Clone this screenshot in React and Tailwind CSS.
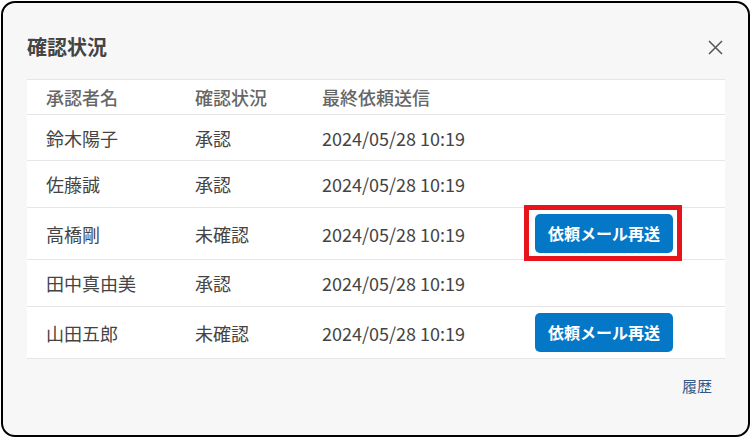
const rows = [
  { name: '鈴木陽子', status: '承認', sentAt: '2024/05/28 10:19', resend: false },
  { name: '佐藤誠', status: '承認', sentAt: '2024/05/28 10:19', resend: false },
  { name: '高橋剛', status: '未確認', sentAt: '2024/05/28 10:19', resend: true, marked: true },
  { name: '田中真由美', status: '承認', sentAt: '2024/05/28 10:19', resend: false },
  { name: '山田五郎', status: '未確認', sentAt: '2024/05/28 10:19', resend: true },
];

function ResendButton({ marked }) {
  return (
    <div className="relative inline-block">
      <button
        type="button"
        className="h-[39px] rounded-[5px] bg-[#0577c7] px-[13px] text-[16px] font-bold leading-[39px] text-white"
      >
        依頼メール再送
      </button>
      {marked && (
        <div className="pointer-events-none absolute -left-[11px] -right-[9px] -top-[9px] -bottom-[8px] border-[5px] border-[#e8141c]" />
      )}
    </div>
  );
}

function App() {
  return (
    <div className="h-[440px] w-[752px] bg-white pl-[1px] pt-[1px] font-['Noto_Sans_CJK_JP',sans-serif]">
      <div className="h-[436px] w-[749px] rounded-[14px] border-2 border-black bg-[#f7f7f7] pl-[24px] pr-[23px] pt-[30px]">
        <div className="mb-[18px] flex h-[28px] items-center justify-between">
          <h2 className="text-[20px] font-bold leading-[28px] text-[#444]">確認状況</h2>
          <button type="button" className="mr-[2px] text-[#555]">
            {/* close */}
            <svg width="15" height="15" viewBox="0 0 15 15" fill="none" stroke="currentColor" strokeWidth="1.5">
              <path d="M1 1 L14 14 M14 1 L1 14" />
            </svg>
          </button>
        </div>

        <div className="border-t border-[#e6e6e6] bg-white text-[18px] leading-[26px]">
          <div className="grid h-[35px] grid-cols-[149px_127px_213px_1fr] items-center border-b border-[#e6e6e6] pl-[19px] font-medium text-[#666]">
            <div>承認者名</div>
            <div>確認状況</div>
            <div>最終依頼送信</div>
            <div />
          </div>
          {rows.map((row, i) => (
            <div
              key={i}
              className={
                'grid grid-cols-[149px_127px_213px_1fr] items-center border-b border-[#e6e6e6] pl-[19px] text-[#444] ' +
                (row.resend ? 'h-[52px]' : i === 0 ? 'h-[46px]' : 'h-[47px]')
              }
            >
              <div>{row.name}</div>
              <div>{row.status}</div>
              <div>{row.sentAt}</div>
              <div>{row.resend && <ResendButton marked={row.marked} />}</div>
            </div>
          ))}
        </div>

        <div className="mt-[16px] flex justify-end pr-[13px]">
          <a href="#" className="text-[15px] leading-[22px] text-[#34598a]">履歴</a>
        </div>
      </div>
    </div>
  );
}

export default App;
